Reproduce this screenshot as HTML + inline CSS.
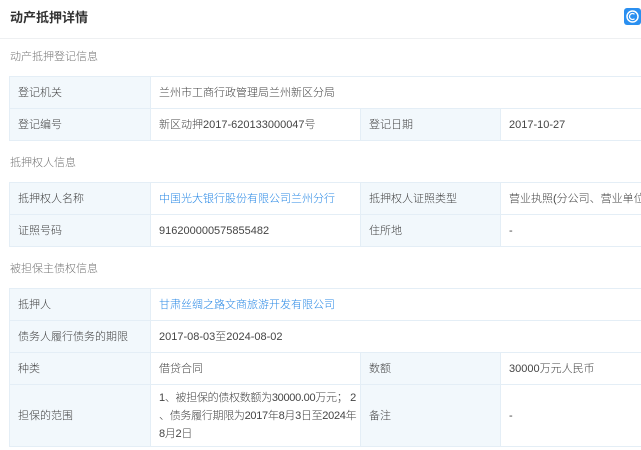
<!DOCTYPE html>
<html><head><meta charset="utf-8"><style>
body{margin:0;width:641px;height:450px;overflow:hidden;background:#fff;font-family:"Liberation Sans","Noto Sans CJK SC",sans-serif;color:#333;position:relative}
.t{position:absolute;left:10px;top:9px;font-size:13px;font-weight:bold;color:#333;line-height:18px}
.sep{position:absolute;left:0;right:0;top:38px;height:1px;background:#eef0f2}
.s{position:absolute;left:10px;font-size:11px;color:#777;line-height:14px;font-weight:300}
table{position:absolute;left:9px;border-collapse:collapse;font-size:11px;table-layout:fixed;width:700px;font-weight:300}
td{border:1px solid #e4eef6;padding:0 0 0 8px;height:31px;line-height:16px;color:#444;white-space:nowrap}
td.l{background:#f2f8fc;color:#444}
a{color:#2b8ae6;text-decoration:none}
.ic{position:absolute;left:624px;top:8px;width:17px;height:17px;background:#2a8ff0;border-radius:3px}
</style></head><body>
<div class="t">动产抵押详情</div>
<div class="ic"><svg width="17" height="17" viewBox="0 0 17 17"><circle cx="8.5" cy="8.5" r="5.5" fill="none" stroke="#fff" stroke-width="1.5"/><path d="M10.5 6.3A3 3 0 1 0 10.5 10.7" fill="none" stroke="#fff" stroke-width="1.3"/></svg></div>
<div class="sep"></div>
<div class="s" style="top:50px">动产抵押登记信息</div>
<table style="top:76px"><colgroup><col style="width:141px"><col style="width:210px"><col style="width:140px"><col></colgroup>
<tr><td class="l">登记机关</td><td colspan="3">兰州市工商行政管理局兰州新区分局</td></tr>
<tr><td class="l">登记编号</td><td>新区动押2017-620133000047号</td><td class="l">登记日期</td><td>2017-10-27</td></tr>
</table>
<div class="s" style="top:156px">抵押权人信息</div>
<table style="top:182px"><colgroup><col style="width:141px"><col style="width:210px"><col style="width:140px"><col></colgroup>
<tr><td class="l">抵押权人名称</td><td><a>中国光大银行股份有限公司兰州分行</a></td><td class="l">抵押权人证照类型</td><td>营业执照(分公司、营业单位)</td></tr>
<tr><td class="l">证照号码</td><td>916200000575855482</td><td class="l">住所地</td><td>-</td></tr>
</table>
<div class="s" style="top:262px">被担保主债权信息</div>
<table style="top:288px"><colgroup><col style="width:141px"><col style="width:210px"><col style="width:140px"><col></colgroup>
<tr><td class="l">抵押人</td><td colspan="3"><a>甘肃丝绸之路文商旅游开发有限公司</a></td></tr>
<tr><td class="l">债务人履行债务的期限</td><td colspan="3">2017-08-03至2024-08-02</td></tr>
<tr><td class="l">种类</td><td>借贷合同</td><td class="l">数额</td><td>30000万元人民币</td></tr>
<tr><td class="l" style="height:61px">担保的范围</td><td style="letter-spacing:-0.3px;line-height:18px">1、被担保的债权数额为30000.00万元； 2<br>、债务履行期限为2017年8月3日至2024年<br>8月2日</td><td class="l">备注</td><td>-</td></tr>
</table>
</body></html>
